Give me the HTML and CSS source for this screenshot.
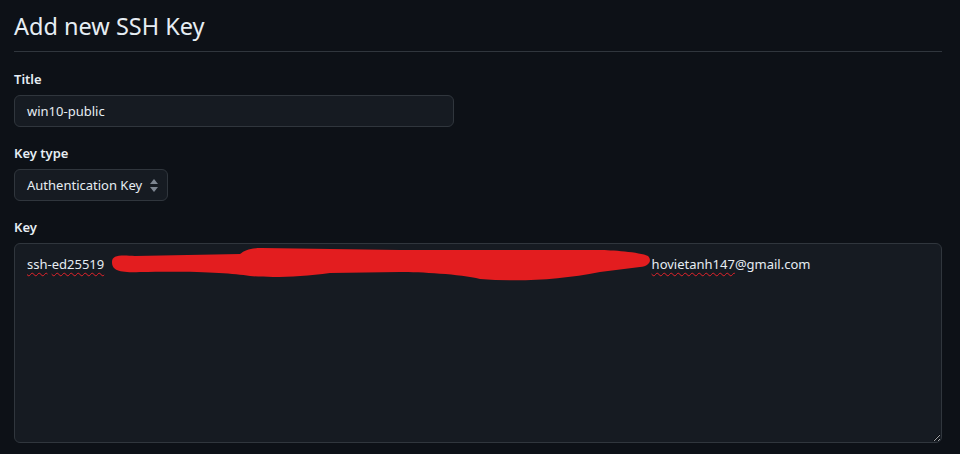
FILE: index.html
```html
<!DOCTYPE html>
<html lang="en">
<head>
<meta charset="utf-8">
<title>Add new SSH Key</title>
<link rel="stylesheet" href="styles.css">
</head>
<body>
<main class="page">
  <h2 class="subhead">Add new SSH Key</h2>
  <form class="form">
    <div class="group">
      <label class="label">Title</label>
      <div class="input input-title">win10-public</div>
    </div>
    <div class="group">
      <label class="label">Key type</label>
      <div class="input select">
        <span>Authentication Key</span>
        <svg class="select-arrow" width="8" height="13" viewBox="0 0 8 13" aria-hidden="true">
          <path d="M4 0 L8 5 L0 5 Z" fill="#7d8590"/>
          <path d="M4 13 L8 8 L0 8 Z" fill="#7d8590"/>
        </svg>
      </div>
    </div>
    <div class="group">
      <label class="label">Key</label>
      <div class="keybox">
        <div class="textarea"><span class="typo">ssh</span>-<span class="typo">ed25519</span> <span class="hidden-key"></span><span class="typo">hovietanh147</span>@gmail.com</div>
        <svg class="scribble" width="928" height="200" viewBox="0 0 928 200" aria-hidden="true">
          <path fill="#e31d1f" d="M98 19 C98 12 106 12 121 13 L226 11 C231 7 236 5 248 5 L386 7 L586 7 C596 7 626 9 634 13 C638 17 636 23 626 24 L586 29 C546 37 506 39 466 36 C446 31 406 29 386 29 L316 30 C286 34 256 35 236 33 C216 30 186 28 126 29 C104 30 98 27 98 19 Z"/>
        </svg>
      </div>
    </div>
  </form>
</main>
</body>
</html>
```

FILE: styles.css
```css
html, body {
  margin: 0;
  padding: 0;
  background: #0d1117;
  color: #e6edf3;
  color-scheme: dark;
  font-family: "Noto Sans", "Open Sans", sans-serif;
  font-size: 13px;
}

.page {
  width: 928px;
  padding: 0 0 0 14px;
}

.subhead {
  margin: 0;
  padding-top: 8px;
  padding-bottom: 7px;
  font-size: 23.5px;
  font-weight: 400;
  line-height: 36px;
  border-bottom: 1px solid #30363d;
}

.form {
  display: flex;
  flex-direction: column;
  gap: 16px;
  padding-top: 17px;
}

.group {
  display: flex;
  flex-direction: column;
  gap: 6px;
  align-items: flex-start;
}

.label {
  font-weight: 600;
  line-height: 20px;
  font-size: 13px;
}

.input {
  box-sizing: border-box;
  height: 32px;
  display: flex;
  align-items: center;
  padding: 0 12px;
  background: #161b22;
  border: 1px solid #30363d;
  border-radius: 6px;
  line-height: 20px;
  white-space: nowrap;
}

.input-title {
  width: 440px;
}

.select {
  width: 154px;
  justify-content: space-between;
  padding-right: 9px;
}

.select-arrow {
  display: block;
  flex: none;
}

.keybox {
  position: relative;
  width: 928px;
}

.textarea {
  box-sizing: border-box;
  width: 928px;
  height: 200px;
  padding: 10px 12px;
  background: #161b22;
  border: 1px solid #30363d;
  border-radius: 6px;
  line-height: 20px;
  resize: both;
  overflow: auto;
  white-space: nowrap;
}

.typo {
  text-decoration: underline wavy #e5222a;
  text-decoration-thickness: 1px;
  text-underline-offset: 3px;
}

.hidden-key {
  display: inline-block;
  width: 544px;
}

.scribble {
  position: absolute;
  left: 0;
  top: 0;
  pointer-events: none;
}
```
